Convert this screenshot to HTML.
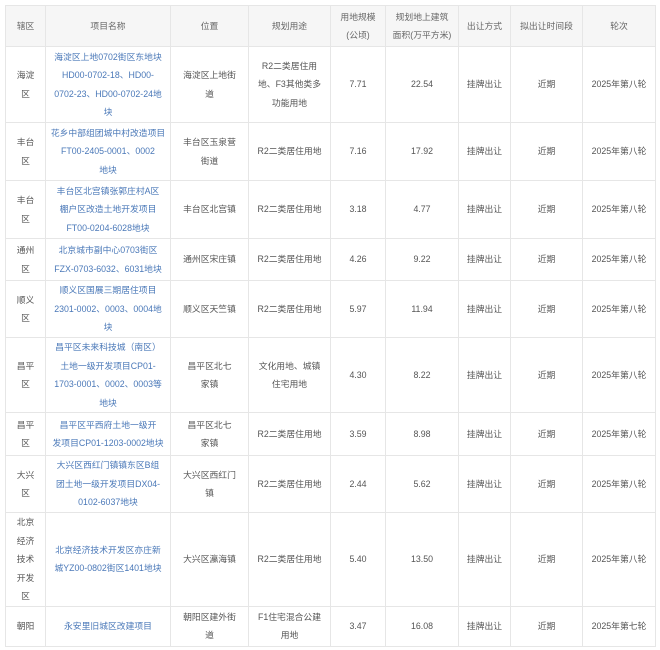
<!DOCTYPE html>
<html><head><meta charset="utf-8"><style>
html,body{margin:0;padding:0;background:#fff;width:660px;height:650px;overflow:hidden}
table{position:absolute;left:5px;top:5px;border-collapse:collapse;table-layout:fixed;width:650px;font-family:"Liberation Sans","Noto Sans CJK SC",sans-serif;font-size:8.8px;line-height:18.5px;color:#555}
td,th{border:1px solid #e6e6e6;text-align:center;vertical-align:middle;padding:0;font-weight:normal;overflow:hidden;white-space:nowrap}
th{background:#f6f6f6;color:#666;line-height:18px}
a{color:#4a78b8;text-decoration:none}
</style></head><body>
<table>
<colgroup><col style="width:40px"><col style="width:125px"><col style="width:78px"><col style="width:82px"><col style="width:55px"><col style="width:73px"><col style="width:52px"><col style="width:72px"><col style="width:73px"></colgroup>
<tr style="height:41px"><th>辖区</th><th>项目名称</th><th>位置</th><th>规划用途</th><th>用地规模<br>(公顷)</th><th>规划地上建筑<br>面积(万平方米)</th><th>出让方式</th><th>拟出让时间段</th><th>轮次</th></tr>
<tr style="height:76px"><td>海淀<br>区</td><td><a>海淀区上地0702街区东地块<br>HD00-0702-18、HD00-<br>0702-23、HD00-0702-24地<br>块</a></td><td>海淀区上地街<br>道</td><td>R2二类居住用<br>地、F3其他类多<br>功能用地</td><td>7.71</td><td>22.54</td><td>挂牌出让</td><td>近期</td><td>2025年第八轮</td></tr>
<tr style="height:58px"><td>丰台<br>区</td><td><a>花乡中部组团城中村改造项目<br>FT00-2405-0001、0002<br>地块</a></td><td>丰台区玉泉营<br>街道</td><td>R2二类居住用地</td><td>7.16</td><td>17.92</td><td>挂牌出让</td><td>近期</td><td>2025年第八轮</td></tr>
<tr style="height:58px"><td>丰台<br>区</td><td><a>丰台区北宫镇张郭庄村A区<br>棚户区改造土地开发项目<br>FT00-0204-6028地块</a></td><td>丰台区北宫镇</td><td>R2二类居住用地</td><td>3.18</td><td>4.77</td><td>挂牌出让</td><td>近期</td><td>2025年第八轮</td></tr>
<tr style="height:42px"><td>通州<br>区</td><td><a>北京城市副中心0703街区<br>FZX-0703-6032、6031地块</a></td><td>通州区宋庄镇</td><td>R2二类居住用地</td><td>4.26</td><td>9.22</td><td>挂牌出让</td><td>近期</td><td>2025年第八轮</td></tr>
<tr style="height:57px"><td>顺义<br>区</td><td><a>顺义区国展三期居住项目<br>2301-0002、0003、0004地<br>块</a></td><td>顺义区天竺镇</td><td>R2二类居住用地</td><td>5.97</td><td>11.94</td><td>挂牌出让</td><td>近期</td><td>2025年第八轮</td></tr>
<tr style="height:75px"><td>昌平<br>区</td><td><a>昌平区未来科技城（南区）<br>土地一级开发项目CP01-<br>1703-0001、0002、0003等<br>地块</a></td><td>昌平区北七<br>家镇</td><td>文化用地、城镇<br>住宅用地</td><td>4.30</td><td>8.22</td><td>挂牌出让</td><td>近期</td><td>2025年第八轮</td></tr>
<tr style="height:43px"><td>昌平<br>区</td><td><a>昌平区平西府土地一级开<br>发项目CP01-1203-0002地块</a></td><td>昌平区北七<br>家镇</td><td>R2二类居住用地</td><td>3.59</td><td>8.98</td><td>挂牌出让</td><td>近期</td><td>2025年第八轮</td></tr>
<tr style="height:57px"><td>大兴<br>区</td><td><a>大兴区西红门镇镇东区B组<br>团土地一级开发项目DX04-<br>0102-6037地块</a></td><td>大兴区西红门<br>镇</td><td>R2二类居住用地</td><td>2.44</td><td>5.62</td><td>挂牌出让</td><td>近期</td><td>2025年第八轮</td></tr>
<tr style="height:93px"><td>北京<br>经济<br>技术<br>开发<br>区</td><td><a>北京经济技术开发区亦庄新<br>城YZ00-0802街区1401地块</a></td><td>大兴区瀛海镇</td><td>R2二类居住用地</td><td>5.40</td><td>13.50</td><td>挂牌出让</td><td>近期</td><td>2025年第八轮</td></tr>
<tr style="height:40px"><td>朝阳</td><td><a>永安里旧城区改建项目</a></td><td>朝阳区建外街<br>道</td><td>F1住宅混合公建<br>用地</td><td>3.47</td><td>16.08</td><td>挂牌出让</td><td>近期</td><td>2025年第七轮</td></tr>
</table>
</body></html>
